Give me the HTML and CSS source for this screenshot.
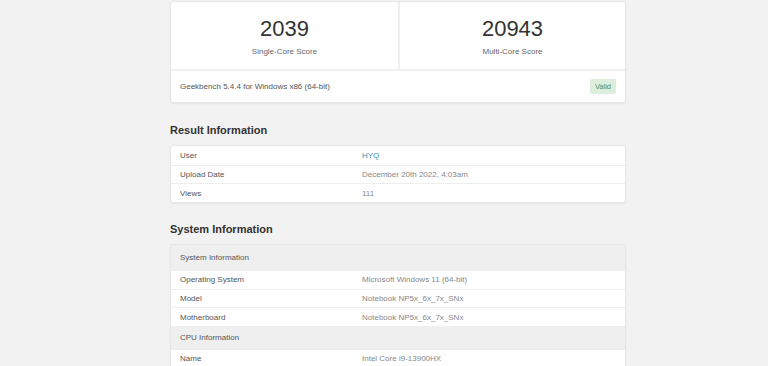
FILE: index.html
```html
<!DOCTYPE html>
<html lang="en">
<head>
    <meta charset="UTF-8">
    <title>Geekbench Result</title>
    <link rel="stylesheet" href="styles.css">
</head>
<body>
    <div class="page">
        <div class="card score-card">
            <div class="scores">
                <div class="score">
                    <div class="score-value">2039</div>
                    <div class="score-label">Single-Core Score</div>
                </div>
                <div class="score">
                    <div class="score-value">20943</div>
                    <div class="score-label">Multi-Core Score</div>
                </div>
            </div>
            <div class="score-footer">
                <span>Geekbench 5.4.4 for Windows x86 (64-bit)</span>
                <span class="badge">Valid</span>
            </div>
        </div>

        <h3 class="section-title">Result Information</h3>
        <div class="card">
            <div class="row"><span class="name">User</span><span class="value"><a href="#">HYQ</a></span></div>
            <div class="row"><span class="name">Upload Date</span><span class="value">December 20th 2022, 4:03am</span></div>
            <div class="row"><span class="name">Views</span><span class="value">111</span></div>
        </div>

        <h3 class="section-title sys-title">System Information</h3>
        <div class="card">
            <div class="group">System Information</div>
            <div class="row"><span class="name">Operating System</span><span class="value">Microsoft Windows 11 (64-bit)</span></div>
            <div class="row"><span class="name">Model</span><span class="value">Notebook NP5x_6x_7x_SNx</span></div>
            <div class="row"><span class="name">Motherboard</span><span class="value">Notebook NP5x_6x_7x_SNx</span></div>
            <div class="group group-cpu">CPU Information</div>
            <div class="row"><span class="name">Name</span><span class="value">Intel Core i9-13900HX</span></div>
        </div>
    </div>
</body>
</html>
```

FILE: styles.css
```css
* {
    margin: 0;
    padding: 0;
    box-sizing: border-box;
}

body {
    font-family: "Liberation Sans", Arial, sans-serif;
    background-color: #f2f2f2;
    color: #444;
    height: 366px;
    overflow: hidden;
}

.page {
    width: 456px;
    margin-left: 170px;
    padding-top: 1px;
}

.card {
    background: #fff;
    border: 1px solid #e6e6e6;
    border-radius: 3px;
    box-shadow: 0 1px 2px rgba(0, 0, 0, 0.05);
}

.scores {
    display: grid;
    grid-template-columns: 1fr 1fr;
    border-bottom: 2px solid #f0f0f0;
}

.score {
    height: 67px;
    text-align: center;
    padding-top: 14px;
}

.score + .score {
    border-left: 2px solid #f0f0f0;
}

.score-value {
    font-size: 22px;
    color: #333;
    line-height: 26px;
}

.score-label {
    font-size: 8px;
    color: #666;
    margin-top: 5px;
}

.score-footer {
    display: flex;
    justify-content: space-between;
    align-items: center;
    height: 31px;
    padding: 0 9px 0 9px;
    font-size: 8px;
    color: #555;
}

.badge {
    background: #dcefdc;
    color: #5a8a5a;
    padding: 3px 5px;
    border-radius: 2px;
    font-size: 7.5px;
}

.section-title {
    font-size: 11px;
    font-weight: bold;
    color: #333;
    margin: 21px 0 8px;
    line-height: 13px;
}

.sys-title {
    margin-top: 20px;
    margin-bottom: 8px;
}

.row {
    display: flex;
    align-items: center;
    height: 18.7px;
    padding-left: 9px;
    font-size: 8px;
    border-top: 1px solid #eee;
}

.row:first-child {
    border-top: none;
}

.name {
    width: 182px;
    color: #555;
}

.value {
    color: #888;
}

.value a {
    color: #3a94b8;
    text-decoration: none;
}

.group {
    display: flex;
    align-items: center;
    height: 25px;
    padding-left: 9px;
    font-size: 8px;
    color: #555;
    background: #efefef;
}

.group-cpu {
    height: 23px;
}
```
